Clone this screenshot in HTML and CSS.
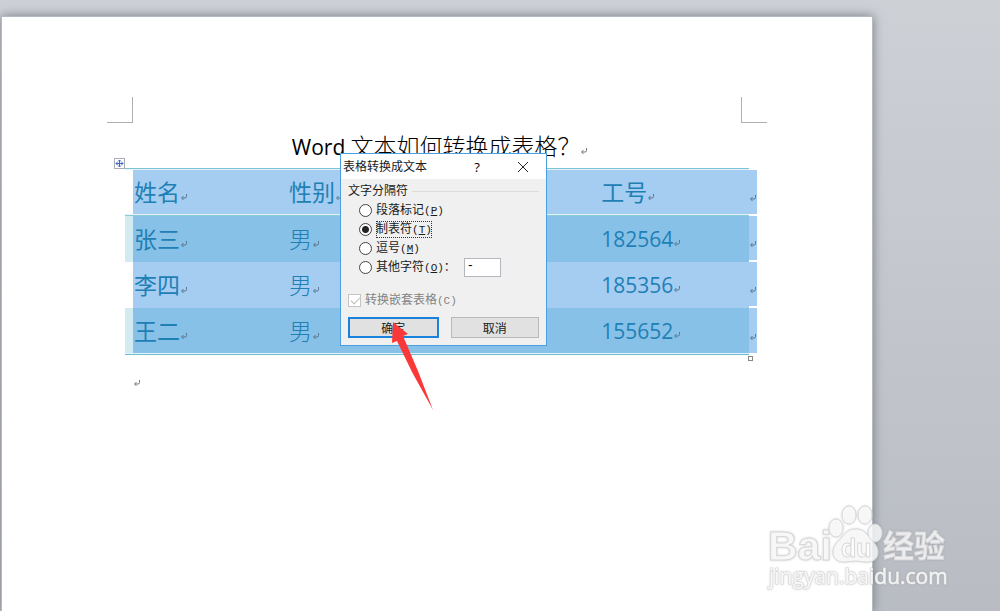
FILE: index.html
```html
<!DOCTYPE html>
<html lang="zh-CN">
<head>
  <meta charset="UTF-8">
  <meta name="viewport" content="width=device-width, initial-scale=1.0">
  <title>Word 文本如何转换成表格？</title>
  <link rel="stylesheet" href="styles.css">
</head>
<body>

  <svg class="defs" aria-hidden="true">
    <symbol id="mark" viewBox="0 0 8 8">
      <path d="M6.500 1v2.500q0 1.500-1.500 1.500H2M3.500 3L1.500 5l2 2" fill="none" stroke="currentColor"/>
    </symbol>
  </svg>

  <main class="page">
    <div class="crops"><span class="crop crop-left"></span><span class="crop crop-right"></span></div>

    <h1><span class="latin">Word</span> 文本如何转换成表格？<svg class="mark"><use href="#mark"/></svg></h1>

    <!-- Выделенная таблица -->
    <div class="table-wrap">
      <svg class="move" viewBox="0 0 11 11" aria-hidden="true">
        <rect x=".5" y=".5" width="10" height="10" fill="#fff" stroke="#a9adb5"/>
        <path d="M5.500 2v7M2 5.500h7M4 3.500L5.500 2 7 3.500M4 7.500L5.500 9 7 7.500M3.500 4L2 5.500 3.500 7M7.500 4L9 5.500 7.500 7" fill="none" stroke="#3f66c4"/>
      </svg>
      <table>
        <thead>
          <tr>
            <th>姓名<svg class="mark"><use href="#mark"/></svg></th>
            <th>性别<svg class="mark"><use href="#mark"/></svg></th>
            <th></th>
            <th>工号<svg class="mark"><use href="#mark"/></svg></th>
            <td class="end"><svg class="mark"><use href="#mark"/></svg></td>
          </tr>
        </thead>
        <tbody>
          <tr class="band">
            <td>张三<svg class="mark"><use href="#mark"/></svg></td>
            <td>男<svg class="mark"><use href="#mark"/></svg></td>
            <td></td>
            <td class="num">182564<svg class="mark"><use href="#mark"/></svg></td>
            <td class="end"><svg class="mark"><use href="#mark"/></svg></td>
          </tr>
          <tr>
            <td>李四<svg class="mark"><use href="#mark"/></svg></td>
            <td>男<svg class="mark"><use href="#mark"/></svg></td>
            <td></td>
            <td class="num">185356<svg class="mark"><use href="#mark"/></svg></td>
            <td class="end"><svg class="mark"><use href="#mark"/></svg></td>
          </tr>
          <tr class="band">
            <td>王二<svg class="mark"><use href="#mark"/></svg></td>
            <td>男<svg class="mark"><use href="#mark"/></svg></td>
            <td></td>
            <td class="num">155652<svg class="mark"><use href="#mark"/></svg></td>
            <td class="end"><svg class="mark"><use href="#mark"/></svg></td>
          </tr>
        </tbody>
      </table>
      <span class="resize"></span>
    </div>

    <p class="after"><svg class="mark"><use href="#mark"/></svg></p>

    <!-- Диалог -->
    <form class="dialog" role="dialog" aria-labelledby="dialogTitle">
      <header class="titlebar">
        <h2 id="dialogTitle">表格转换成文本</h2>
        <button type="button" class="tool" aria-label="帮助">?</button>
        <button type="button" class="tool" aria-label="关闭">
          <svg width="12" height="12" viewBox="0 0 12 12"><path d="M1 1l10 10M11 1L1 11" stroke="#222" fill="none"/></svg>
        </button>
      </header>
      <div class="dialog-body">
        <div class="group" role="radiogroup" aria-labelledby="groupTitle">
          <div class="legend" id="groupTitle">文字分隔符</div>
          <div class="option"><input type="radio" name="sep" id="sepP"><label for="sepP">段落标记<span class="key">(<u>P</u>)</span></label></div>
          <div class="option"><input type="radio" name="sep" id="sepT" checked><label for="sepT" class="focused">制表符<span class="key">(<u>T</u>)</span></label></div>
          <div class="option"><input type="radio" name="sep" id="sepM"><label for="sepM">逗号<span class="key">(<u>M</u>)</span></label></div>
          <div class="option"><input type="radio" name="sep" id="sepO"><label for="sepO">其他字符<span class="key">(<u>O</u>)</span>：</label><input type="text" value="-" aria-label="其他字符"></div>
        </div>
        <div class="nested"><input type="checkbox" id="nested" checked disabled><label for="nested">转换嵌套表格<span class="key">(C)</span></label></div>
        <div class="buttons">
          <button type="button" class="btn primary">确定</button>
          <button type="button" class="btn">取消</button>
        </div>
      </div>
      <svg class="arrow" viewBox="0 0 44 90" aria-hidden="true"><path d="M1 0L16 12 11 14 26 49 41 88 20 50 5 19 0 21z" fill="#fb3838"/></svg>
    </form>
  </main>

  <svg class="watermark" viewBox="0 0 184 94" role="img" aria-label="Baidu 经验">
    <g class="ink">
      <text x="2" y="59" class="wm-logo">Bai</text>
      <ellipse cx="70" cy="27" rx="7" ry="9"/>
      <ellipse cx="83" cy="14" rx="7" ry="9"/>
      <ellipse cx="99" cy="14" rx="7" ry="9"/>
      <ellipse cx="109" cy="32" rx="7" ry="9"/>
      <path d="M90 28c7 0 10 4 13 8 5 6 9 9 9 15 0 7-5 10-11 10-5 0-8-1-12-1s-7 1-11 1c-7 0-11-4-11-10 0-7 5-10 9-15 4-5 7-8 14-8z"/>
      <text x="75" y="56" class="wm-du">du</text>
      <text x="117" y="56" class="wm-cn">经验</text>
      <text x="3" y="83" class="wm-url">jingyan.baidu.com</text>
    </g>
  </svg>

</body>
</html>
```
FILE: styles.css
```css
* { box-sizing: border-box; }
body {
  margin: 0;
  padding: 17px 0 0 2px;
  min-height: 100vh;
  position: relative;
  overflow: hidden;
  background: linear-gradient(#cdd0d5, #b9bdc3);
  font-family: "Noto Sans", "Noto Sans CJK SC", sans-serif;
}
.defs {
  position: absolute;
  width: 0;
  height: 0;
}
.page {
  position: relative;
  width: 87.2%;
  min-height: calc(100vh - 17px);
  padding: 80px 131px 0;
  background: #fff;
  box-shadow: 0 0 0 1px #b4bac2, 0 0 10px 1px #777b82;
}
.mark {
  width: 8px;
  height: 8px;
  color: #5b7690;
}

/* Уголки полей */
.crops {
  display: flex;
  justify-content: space-between;
  margin: 0 -26px;
}
.crop {
  width: 26px;
  height: 26px;
  border-bottom: 1px solid #b0b0b0;
}
.crop-left { border-right: 1px solid #b0b0b0; }
.crop-right { border-left: 1px solid #b0b0b0; }

h1 {
  margin: 0;
  height: 45px;
  padding-left: 6px;
  line-height: 44px;
  font-size: 23px;
  font-weight: 300;
  font-family: "Noto Sans CJK SC", sans-serif;
  color: #000;
  text-align: center;
  white-space: nowrap;
}
.latin {
  font: 400 21px "Open Sans", sans-serif;
}
h1 .mark, .after .mark { color: #777; }

/* Таблица */
.table-wrap {
  position: relative;
  margin: 0 -16px 0 -8px;
}
table {
  width: 100%;
  table-layout: fixed;
  border-collapse: separate;
  border-spacing: 0;
}
th, td {
  height: 46px;
  padding: 0 0 2px 8px;
  font-size: 23px;
  line-height: 30px;
  font-weight: 300;
  font-family: "Noto Sans CJK SC", sans-serif;
  text-align: left;
  white-space: nowrap;
  color: #1f80b6;
  background: #a4cdf1;
}
thead th {
  height: 48px;
  border-top: 1px solid #7cc4d8;
  border-bottom: 1px solid #8ccbdc;
  box-shadow: inset 0 1px #e4f3fa, inset 0 -1px #e4f3fa;
}
th, td:first-child { font-weight: 400; }
.num {
  padding-bottom: 0;
  font: 400 21px/30px "Open Sans", sans-serif;
}
td:last-child {
  width: 8px;
  padding: 0;
  border-bottom: 2px solid #fff;
}
thead td:last-child { border-top: 2px solid #fff; }
th:first-child, td:first-child {
  padding-left: 9px;
  background: linear-gradient(90deg, #fff 8px, #a4cdf1 8px);
}
.band td { background: #87c1e7; }
.band td:first-child { background: linear-gradient(90deg, #d2eaf1 8px, #87c1e7 8px); }
.band .end { background: #a4cdf1; }
tbody tr:last-child td:not(.end) {
  height: 47px;
  border-bottom: 1px solid #6fbdd3;
  box-shadow: inset 0 -1px #e4f3fa;
}
.move {
  position: absolute;
  top: -10px;
  left: -11px;
  width: 11px;
  height: 11px;
}
.resize {
  position: absolute;
  right: 4px;
  bottom: -6px;
  width: 5px;
  height: 5px;
  border: 1px solid #888;
  background: #fff;
}
.after {
  margin: 14px 0 0;
  line-height: 24px;
}

/* Диалог */
.dialog {
  position: absolute;
  top: 136px;
  left: 338px;
  width: 207px;
  border: 1px solid #4a9fe0;
  background: #f0f0f0;
  font-size: 12px;
  line-height: 16px;
  color: #1a1a1a;
}
.titlebar {
  display: flex;
  align-items: center;
  height: 25px;
  padding: 0 8px 0 2px;
  background: #fff;
}
.titlebar h2 {
  flex: 1;
  margin: 0;
  font-size: 12px;
  font-weight: 400;
}
.tool {
  display: flex;
  justify-content: center;
  align-items: center;
  width: 30px;
  height: 24px;
  margin-left: 16px;
  padding: 0;
  border: 0;
  background: none;
  font: 13px "Open Sans", sans-serif;
}
.tool:first-of-type { margin: 0; }
.dialog-body { padding: 4px 7px 7px; }
.legend {
  display: flex;
  align-items: center;
  height: 16px;
  margin-bottom: 2px;
  gap: 4px;
}
.legend::after {
  content: "";
  flex: 1;
  border-top: 1px solid #dcdcdc;
}
.option {
  display: flex;
  align-items: center;
  height: 19px;
  padding-left: 11px;
}
input[type="radio"], input[type="checkbox"] {
  appearance: none;
  flex: none;
  width: 13px;
  height: 13px;
  margin: 0 4px 0 0;
  border: 1px solid #444;
  border-radius: 50%;
  background: #fff;
}
input[type="radio"]:checked {
  background: radial-gradient(circle, #222 0 3px, #fff 4px);
}
input[type="text"] {
  width: 37px;
  height: 19px;
  margin-left: 8px;
  padding: 0 2px 3px;
  border: 1px solid #b4b7bd;
  background: #fff;
  font: 12px "Liberation Mono", monospace;
}
.focused {
  outline: 1px dotted #333;
  outline-offset: -1px;
}
.key {
  font-family: "Liberation Mono", monospace;
  font-size: 11px;
}
.nested {
  display: flex;
  align-items: center;
  height: 16px;
  margin-top: 15px;
  color: #838383;
}
.nested input {
  border-color: #c4c4c4;
  border-radius: 0;
}
.nested input::after {
  content: "";
  display: block;
  width: 8px;
  height: 4px;
  margin: 2px 0 0 2px;
  border: solid #bbb;
  border-width: 0 0 1px 1px;
  transform: rotate(-45deg);
}
.buttons {
  display: flex;
  gap: 12px;
  margin-top: 9px;
}
.btn {
  flex: 1 1 0;
  min-width: 0;
  height: 21px;
  padding: 0;
  border: 1px solid #b9b9b9;
  background: #e1e1e1;
  font: 12px/16px "Noto Sans CJK SC", sans-serif;
  color: #1a1a1a;
}
.primary { border: 2px solid #1a82dc; }
.arrow {
  position: absolute;
  top: 168px;
  left: 51px;
  width: 44px;
  height: 90px;
}

/* Водяной знак */
.watermark {
  position: absolute;
  right: 50px;
  bottom: 16px;
  width: 184px;
  height: 94px;
}
.ink {
  fill: #fff;
  fill-opacity: .8;
  stroke: #d8d8da;
  stroke-width: 1px;
  filter: drop-shadow(0 0 1px rgba(100, 100, 110, .3));
}
.wm-logo { font: bold 41px "Liberation Sans", sans-serif; }
.wm-du { font: bold 25px "Liberation Sans", sans-serif; }
.wm-cn { font: bold 31px "Noto Sans CJK SC", sans-serif; }
.wm-url {
  font: 21px "Open Sans", sans-serif;
  paint-order: stroke;
}
```
